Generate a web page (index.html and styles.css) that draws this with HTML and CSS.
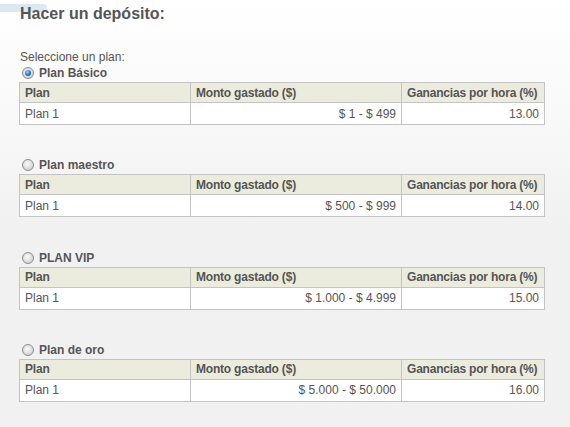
FILE: index.html
```html
<!DOCTYPE html>
<html lang="es">
<head>
<meta charset="utf-8">
<title>Hacer un depósito</title>
<link rel="stylesheet" href="styles.css">
</head>
<body>
<div class="topbar"></div>
<main class="page">
  <h2 class="title">Hacer un depósito:</h2>
  <p class="intro">Seleccione un plan:</p>

  <section class="plan">
    <div class="plan-label"><span class="radio checked"></span><b>Plan Básico</b></div>
    <table class="plan-table">
      <colgroup><col class="c1"><col class="c2"><col class="c3"></colgroup>
      <tr><th>Plan</th><th>Monto gastado ($)</th><th>Ganancias por hora (%)</th></tr>
      <tr><td>Plan 1</td><td class="num">$ 1 - $ 499</td><td class="num">13.00</td></tr>
    </table>
  </section>

  <section class="plan">
    <div class="plan-label"><span class="radio"></span><b>Plan maestro</b></div>
    <table class="plan-table">
      <colgroup><col class="c1"><col class="c2"><col class="c3"></colgroup>
      <tr><th>Plan</th><th>Monto gastado ($)</th><th>Ganancias por hora (%)</th></tr>
      <tr><td>Plan 1</td><td class="num">$ 500 - $ 999</td><td class="num">14.00</td></tr>
    </table>
  </section>

  <section class="plan">
    <div class="plan-label"><span class="radio"></span><b>PLAN VIP</b></div>
    <table class="plan-table">
      <colgroup><col class="c1"><col class="c2"><col class="c3"></colgroup>
      <tr><th>Plan</th><th>Monto gastado ($)</th><th>Ganancias por hora (%)</th></tr>
      <tr><td>Plan 1</td><td class="num">$ 1.000 - $ 4.999</td><td class="num">15.00</td></tr>
    </table>
  </section>

  <section class="plan">
    <div class="plan-label"><span class="radio"></span><b>Plan de oro</b></div>
    <table class="plan-table">
      <colgroup><col class="c1"><col class="c2"><col class="c3"></colgroup>
      <tr><th>Plan</th><th>Monto gastado ($)</th><th>Ganancias por hora (%)</th></tr>
      <tr><td>Plan 1</td><td class="num">$ 5.000 - $ 50.000</td><td class="num">16.00</td></tr>
    </table>
  </section>
</main>
</body>
</html>
```

FILE: styles.css
```css
html, body {
  margin: 0;
  padding: 0;
}
body {
  min-height: 427px;
  background: linear-gradient(to bottom, #ffffff 0px, #f8f8f8 130px, #f1f1f1 225px, #f1f1f1 100%);
  font-family: "Liberation Sans", Arial, sans-serif;
  color: #555555;
  position: relative;
}
.topbar {
  position: absolute;
  left: 0;
  top: 4px;
  width: 47px;
  height: 8px;
  background: #dce8f0;
  border-radius: 0 4px 4px 0;
}
.page {
  position: relative;
  padding: 0 0 0 19px;
}
.title {
  margin: 0;
  padding-top: 4px;
  padding-left: 1px;
  font-size: 16px;
  line-height: 20px;
  font-weight: bold;
  color: #555555;
}
.intro {
  margin: 26px 0 0 1px;
  font-size: 12px;
  line-height: 14px;
}
.plan {
  margin-bottom: 31.33px;
}
.plan-label {
  display: flex;
  align-items: center;
  gap: 5px;
  height: 18px;
  padding-left: 3px;
  font-size: 12px;
}
.plan-label b {
  color: #555555;
}
.radio {
  width: 12px;
  height: 12px;
  border-radius: 50%;
  box-sizing: border-box;
  border: 1px solid #8c8c8c;
  background: radial-gradient(circle at 45% 40%, #fafafa 0%, #dedede 55%, #bdbdbd 100%);
  position: relative;
}
.radio.checked::after {
  content: "";
  position: absolute;
  left: 2px;
  top: 2px;
  width: 6px;
  height: 6px;
  border-radius: 50%;
  background: radial-gradient(circle at 40% 35%, #a8d8ff 0%, #2f7fd6 45%, #0b3f80 100%);
}
.plan-table {
  width: 525px;
  table-layout: fixed;
  border-collapse: collapse;
  font-size: 12px;
  line-height: 14px;
  color: #555555;
}
.plan-table .c1 { width: 171px; }
.plan-table .c2 { width: 211px; }
.plan-table .c3 { width: 143px; }
.plan-table th,
.plan-table td {
  border: 1px solid #c4c4c4;
  padding: 0 5px;
  white-space: nowrap;
  overflow: visible;
  box-sizing: border-box;
}
.plan-table th {
  background: #ebecde;
  text-align: left;
  font-weight: bold;
  height: 20px;
  letter-spacing: -0.2px;
}
.plan-table td {
  background: #ffffff;
  height: 22px;
}
.plan-table .num {
  text-align: right;
}
```
